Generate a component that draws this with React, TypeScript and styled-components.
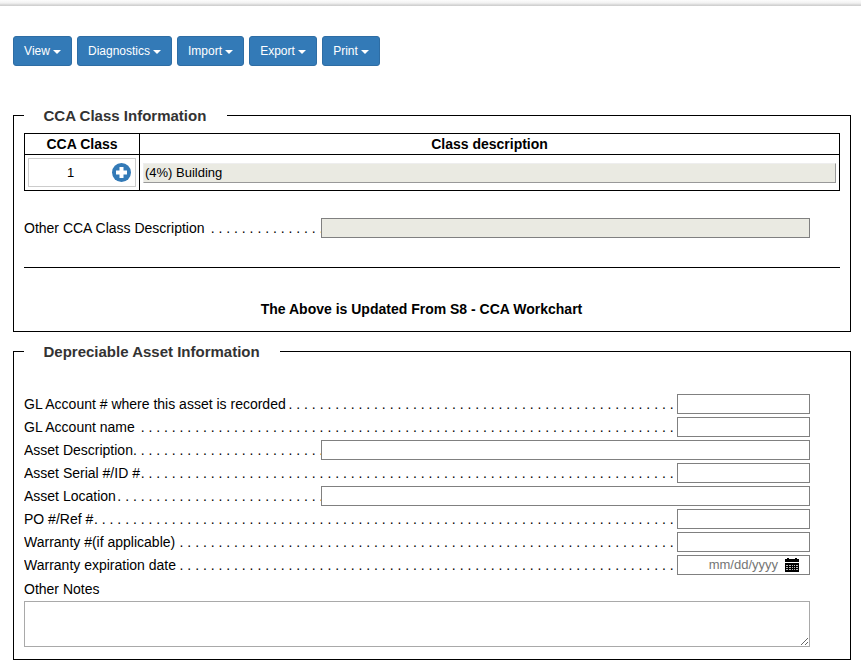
import React from "react";
import styled, { createGlobalStyle } from "styled-components";

const GlobalStyle = createGlobalStyle`
  *, *::before, *::after { box-sizing: border-box; }
  body {
    margin: 0;
    background: #fff;
    color: #000;
    font: 14px/20px "Liberation Sans", Arial, sans-serif;
    overflow: hidden;
  }
`;

const TopShadow = styled.div`
  height: 6px;
  background: linear-gradient(#fcfcfc 0, #f2f2f2 50%, #dcdcdc 75%, #cbcbcb 100%);
`;

const Page = styled.main`
  width: 838px;
  margin-left: 13px;
`;

const Toolbar = styled.nav`
  display: flex;
  gap: 5px;
  padding-top: 30px;
`;

const MenuButton = styled.button<{ $width: number }>`
  display: flex;
  align-items: center;
  justify-content: center;
  gap: 3px;
  width: ${(p) => p.$width}px;
  height: 30px;
  padding: 0;
  border: 1px solid #2e6da4;
  border-radius: 3px;
  background: #337ab7;
  color: #fff;
  font: 12px/18px "Liberation Sans", Arial, sans-serif;
`;

const Caret = styled.span`
  margin-top: 2px;
  border-top: 4px solid #fff;
  border-left: 4px solid transparent;
  border-right: 4px solid transparent;
`;

const Section = styled.fieldset<{ $top: number; $height: number }>`
  margin: ${(p) => p.$top}px 0 0;
  height: ${(p) => p.$height}px;
  min-width: 0;
  padding: 0 10px;
  border: 1px solid #000;
`;

const Legend = styled.legend<{ $width: number }>`
  width: ${(p) => p.$width}px;
  height: 21px;
  padding: 0 0 0 19.5px;
  color: #333;
  font-size: 15px;
  font-weight: bold;
  line-height: 22px;
  white-space: nowrap;
`;

const ClassTable = styled.div`
  display: grid;
  grid-template-columns: 114px 699px;
  grid-template-rows: 20px 35px;
  gap: 1px;
  margin-top: 7px;
  border: 1px solid #000;
  background: #000;
`;

const HeadCell = styled.div`
  background: #fff;
  text-align: center;
  font-weight: bold;
`;

const Cell = styled.div`
  display: flex;
  align-items: center;
  padding: 3px;
  background: #fff;
`;

const ClassNumber = styled.div`
  display: flex;
  align-items: center;
  width: 108px;
  height: 29px;
  border: 1px solid #ccc;
  padding-right: 4px;
`;

const NumberText = styled.span`
  flex: 1;
  text-align: center;
  font-size: 13px;
`;

const ClassDescription = styled.div`
  flex: 1;
  height: 20px;
  padding-left: 1px;
  font-size: 13px;
  line-height: 17px;
  border: 1px solid;
  border-color: #eee #999 #999 #eee;
  background: #eaeae2;
`;

const Row = styled.div`
  display: flex;
  height: 23px;
  width: 786px;
`;

const LabelArea = styled.div`
  display: flex;
  flex: 1;
  min-width: 0;
  height: 20px;
  overflow: hidden;
`;

/* Width of one "dot + space" step of the leader at 14px. */
const STEP = 7.78;

const Label = styled.label<{ $steps: number }>`
  flex: none;
  width: ${(p) => p.$steps * STEP}px;
  white-space: nowrap;
`;

const Leader = styled.span`
  flex: none;
  white-space: nowrap;
`;

const Field = styled.div<{ $wide?: boolean; $filled?: boolean }>`
  display: flex;
  align-items: center;
  justify-content: flex-end;
  width: ${(p) => (p.$wide ? 489 : 133)}px;
  height: 20px;
  padding-right: 10px;
  border: 1px solid #808080;
  background: ${(p) => (p.$filled ? "#eaeae2" : "#fff")};
  color: #757575;
`;

const DateHint = styled.span`
  margin-right: 7px;
  font-size: 13px;
  line-height: 18px;
`;

const OtherDescription = styled.div`
  margin-top: 27px;
`;

const Rule = styled.div`
  height: 1px;
  margin-top: 26px;
  background: #000;
`;

const Notice = styled.p`
  margin: 31px 0 0;
  padding-right: 21px;
  text-align: center;
  font-weight: bold;
`;

const AssetRows = styled.div`
  padding-top: 32px;
`;

const NotesLabel = styled.label`
  display: block;
  margin-top: 1px;
`;

const Notes = styled.textarea`
  display: block;
  width: 786px;
  height: 46px;
  margin-top: 2px;
  border: 1px solid #a9a9a9;
  outline: none;
  resize: vertical;
`;

const menus: [string, number][] = [
  ["View", 59],
  ["Diagnostics", 95],
  ["Import", 67],
  ["Export", 68],
  ["Print", 58],
];

interface FieldSpec {
  label: string;
  steps: number;
  wide?: boolean;
  filled?: boolean;
  date?: boolean;
}

const assetFields: FieldSpec[] = [
  { label: "GL Account # where this asset is recorded", steps: 34 },
  { label: "GL Account name", steps: 15 },
  { label: "Asset Description", steps: 14, wide: true },
  { label: "Asset Serial #/ID #", steps: 15 },
  { label: "Asset Location", steps: 12, wide: true },
  { label: "PO #/Ref #", steps: 9 },
  { label: "Warranty #(if applicable)", steps: 20 },
  { label: "Warranty expiration date", steps: 20, date: true },
];

function PlusIcon() {
  return (
    <svg width="19" height="19" viewBox="0 0 19 19">
      <circle cx="9.5" cy="9.5" r="9.5" fill="#337ab7" />
      <path d="M7.5 4h4v3.5H15v4h-3.5V15h-4v-3.5H4v-4h3.5z" fill="#fff" />
    </svg>
  );
}

function CalendarIcon() {
  return (
    <svg width="14" height="14" viewBox="0 0 14 14" shapeRendering="crispEdges">
      <path d="M0 1h2V0h2v1h6V0h2v1h2v3H0zM0 5h14v9H0z" fill="#000" />
      <path
        d="M1 7h2v1H1zM4 7h2v1H4zM7 7h1v1H7zM9 7h1v1H9zM11 7h2v1h-2zM1 9h2v1H1zM4 9h2v1H4zM7 9h1v1H7zM9 9h1v1H9zM11 9h2v1h-2zM1 11h2v1H1zM4 11h2v1H4zM7 11h1v1H7zM9 11h1v1H9zM11 11h2v1h-2z"
        fill="#bbb"
      />
    </svg>
  );
}

function FormRow({ label, steps, wide, filled, date }: FieldSpec) {
  const total = wide ? 39 : 84;
  return (
    <Row>
      <LabelArea>
        <Label $steps={steps}>{label}</Label>
        <Leader aria-hidden>{". ".repeat(total - steps).trim()}</Leader>
      </LabelArea>
      <Field $wide={wide} $filled={filled}>
        {date && (
          <>
            <DateHint>mm/dd/yyyy</DateHint>
            <CalendarIcon />
          </>
        )}
      </Field>
    </Row>
  );
}

export default function App() {
  return (
    <>
      <GlobalStyle />
      <TopShadow />
      <Page>
        <Toolbar>
          {menus.map(([name, width]) => (
            <MenuButton key={name} $width={width}>
              {name}
              <Caret />
            </MenuButton>
          ))}
        </Toolbar>
        <Section $top={39} $height={227}>
          <Legend $width={203}>CCA Class Information</Legend>
          <ClassTable>
            <HeadCell>CCA Class</HeadCell>
            <HeadCell>Class description</HeadCell>
            <Cell>
              <ClassNumber>
                <NumberText>1</NumberText>
                <PlusIcon />
              </ClassNumber>
            </Cell>
            <Cell>
              <ClassDescription>(4%) Building</ClassDescription>
            </Cell>
          </ClassTable>
          <OtherDescription>
            <FormRow label="Other CCA Class Description" steps={24} wide filled />
          </OtherDescription>
          <Rule />
          <Notice>The Above is Updated From S8 - CCA Workchart</Notice>
        </Section>
        <Section $top={9} $height={319}>
          <Legend $width={256}>Depreciable Asset Information</Legend>
          <AssetRows>
            {assetFields.map((f) => (
              <FormRow key={f.label} {...f} />
            ))}
          </AssetRows>
          <NotesLabel>Other Notes</NotesLabel>
          <Notes />
        </Section>
      </Page>
    </>
  );
}
